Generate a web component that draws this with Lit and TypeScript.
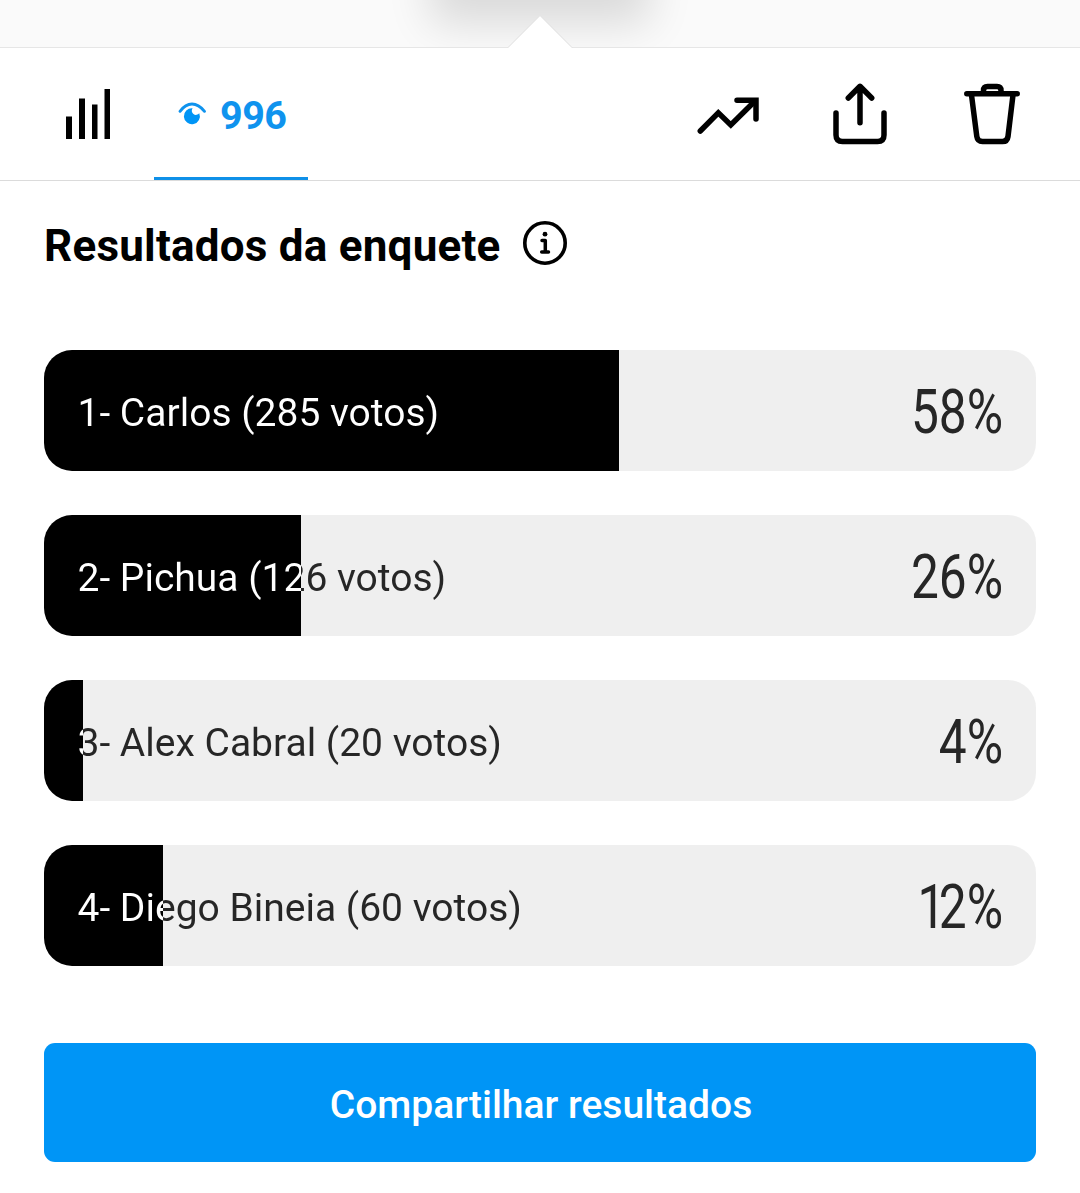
import { LitElement, html, css } from "lit";
import { customElement } from "lit/decorators.js";
import { styleMap } from "lit/directives/style-map.js";

interface Option {
  label: string;
  percent: number;
}

const TRACK_WIDTH = 992;

const OPTIONS: Option[] = [
  { label: "1- Carlos (285 votos)", percent: 58 },
  { label: "2- Pichua (126 votos)", percent: 26 },
  { label: "3- Alex Cabral (20 votos)", percent: 4 },
  { label: "4- Diego Bineia (60 votos)", percent: 12 },
];

@customElement("app-root")
export class AppRoot extends LitElement {
  static styles = css`
    :host {
      display: block;
      height: 1193px;
      background: #fff;
      color: #000;
      font-family: Roboto, "Liberation Sans", sans-serif;
      overflow: hidden;
    }
    .strip {
      box-sizing: border-box;
      height: 48px;
      background: #fafafa;
      overflow: hidden;
    }
    .strip-art {
      display: block;
      width: 1080px;
      height: 48px;
    }
    .tabs {
      box-sizing: border-box;
      height: 133px;
      border-bottom: 1px solid #dbdbdb;
      display: flex;
      justify-content: space-between;
    }
    .group {
      display: flex;
    }
    .tab {
      box-sizing: border-box;
      width: 154px;
      height: 132px;
      display: flex;
      align-items: center;
    }
    .tab.insights {
      padding-left: 60px;
    }
    .tab.viewers {
      padding: 3px 0 0 22px;
      gap: 12px;
      border-bottom: 3px solid #0f90e8;
      color: #0f93ee;
    }
    .count {
      font-size: 39.5px;
      font-weight: 700;
      line-height: 48px;
      letter-spacing: -0.5px;
      padding-top: 3px;
    }
    .actions {
      display: flex;
      align-items: center;
      gap: 60px;
      padding: 2px 52px 0 0;
    }
    svg {
      display: block;
      flex: none;
    }
    .content {
      padding: 0 44px;
    }
    .heading {
      display: flex;
      align-items: center;
      gap: 21px;
      height: 60px;
      padding-top: 32px;
    }
    h1 {
      margin: 0;
      font-size: 44px;
      line-height: 60px;
      font-weight: 700;
      letter-spacing: 0.22px;
      padding-top: 6px;
    }
    .rows {
      display: flex;
      flex-direction: column;
      gap: 44px;
      margin-top: 77px;
    }
    .row {
      height: 121px;
      border-radius: 28px;
      overflow: hidden;
      display: flex;
      background: linear-gradient(
        to right,
        #000 var(--fill),
        #efefef var(--fill)
      );
    }
    .label {
      flex: 1;
      padding-left: 33.5px;
      font-size: 39px;
      line-height: 127px;
      white-space: nowrap;
      color: transparent;
      background: linear-gradient(
        to right,
        #fff var(--fill),
        #262626 var(--fill)
      );
      -webkit-background-clip: text;
      background-clip: text;
    }
    .percent {
      font-size: 60.5px;
      line-height: 126px;
      color: #262626;
      transform: scaleX(0.82);
      transform-origin: right;
      padding-right: 32px;
      margin-right: 7px;
    }
    .narrow {
      letter-spacing: -8px;
    }
    .share {
      display: block;
      width: 992px;
      height: 119px;
      margin: 77px 0 0;
      padding: 5px 0 0 2px;
      border: 0;
      border-radius: 11px;
      background: #0095f6;
      color: #fff;
      font-family: inherit;
      font-size: 39px;
      font-weight: 500;
    }
  `;

  private renderRow(option: Option) {
    const fill = Math.floor((TRACK_WIDTH * option.percent) / 100);
    const digits = [...String(option.percent)].map((d) =>
      d === "1" ? html`<span class="narrow">${d}</span>` : d
    );
    return html`<div class="row" style=${styleMap({ "--fill": `${fill}px` })}>
      <span class="label">${option.label}</span>
      <span class="percent">${digits}%</span>
    </div>`;
  }

  render() {
    return html`
      <div class="strip">
        <svg class="strip-art" viewBox="0 0 1080 48">
          <defs>
            <filter id="soft" filterUnits="userSpaceOnUse" x="300" y="-200" width="480" height="400">
              <feGaussianBlur stdDeviation="22" />
            </filter>
          </defs>
          <rect x="430" y="-90" width="220" height="114" opacity="0.125" filter="url(#soft)" />
          <path d="M0 47.500H1080" stroke="#e6e6e6" />
          <path d="M508 48 540 15.500 572 48Z" fill="#fff" />
          <path d="M508 47.500 540 15.500 572 47.500" fill="none" stroke="#e0e0e0" />
        </svg>
      </div>

      <div class="tabs">
        <div class="group">
          <div class="tab insights">
            <svg width="56" height="56" viewBox="60 86 56 56">
              <path d="M66 116.500h6V139h-6zM79 98.500h6V139h-6zM92 104.500h5.500V139H92zM104.500 89h5.500v50h-5.500z" />
            </svg>
          </div>
          <div class="tab viewers">
            <svg width="32" height="32" viewBox="176 99 32 32">
              <path d="M180 112.300Q185.500 105 192 105T204.500 112.300" fill="none" stroke="currentColor" stroke-width="2.900" stroke-linecap="round" />
              <path d="M192.600 109.200A8 8 0 1 0 199.300 114.200A3.800 3.800 0 0 1 192.600 109.200Z" fill="#0095f6" />
            </svg>
            <span class="count">996</span>
          </div>
        </div>
        <div class="actions">
          <svg width="72" height="72" viewBox="692 79 72 72" fill="none" stroke="#000" stroke-width="5.500" stroke-linecap="round">
            <path d="M700.300 131 718.300 112.800 730.800 125 755 101" stroke-linejoin="miter" />
            <path d="M737 100.200H756V119" />
          </svg>
          <svg width="72" height="72" viewBox="824 79 72 72" fill="none" stroke="#000" stroke-width="5.500" stroke-linecap="round" stroke-linejoin="round">
            <path d="M836 113V135Q836 141.500 842.500 141.500H877.500Q884 141.500 884 135V113" />
            <path d="M860 122.800V87M848.300 98 860 86.300 871.700 98" />
          </svg>
          <svg width="72" height="72" viewBox="956 79 72 72" fill="none" stroke="#000" stroke-width="5.500" stroke-linecap="round" stroke-linejoin="round">
            <path d="M966.800 93.700H1017.200M983.500 93V90.500Q983.500 86.500 987.500 86.500H997Q1001 86.500 1001 90.500V93" />
            <path d="M971.500 95 976.800 136.500Q977.500 141.500 982.500 141.500H1002.500Q1007.300 141.500 1008 136.500L1013 95" />
          </svg>
        </div>
      </div>

      <div class="content">
        <div class="heading">
          <h1>Resultados da enquete</h1>
          <svg width="46" height="46" viewBox="0 0 46 46">
            <circle cx="23" cy="23" r="20.200" fill="none" stroke="#000" stroke-width="3.600" />
            <circle cx="23" cy="14.200" r="2.400" />
            <path d="M20 20.500H23.300V32M19.700 32H26.500" fill="none" stroke="#000" stroke-width="3.500" stroke-linecap="round" stroke-linejoin="round" />
          </svg>
        </div>
        <div class="rows">${OPTIONS.map((o) => this.renderRow(o))}</div>
        <button class="share">Compartilhar resultados</button>
      </div>
    `;
  }
}
